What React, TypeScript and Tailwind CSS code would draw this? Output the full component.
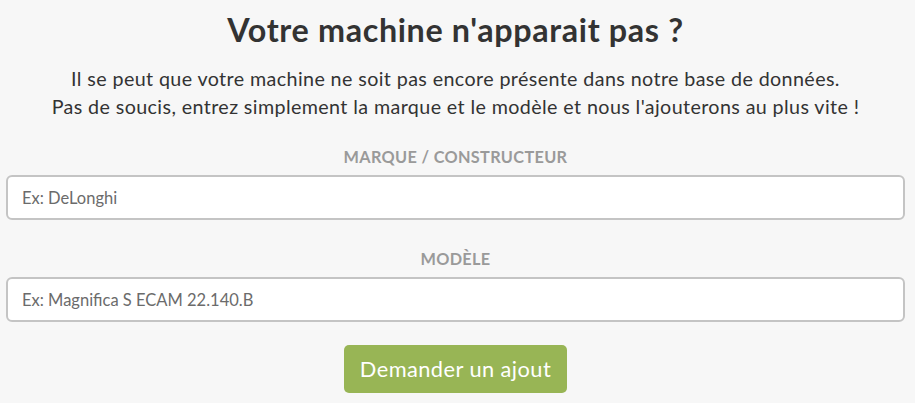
import React from 'react';

const Field: React.FC<{ label: string; placeholder: string }> = ({ label, placeholder }) => (
  <div className="flex flex-col">
    <label className="block h-[20px] text-center text-[16.3px] font-bold uppercase tracking-[0.02em] text-[#9a9a9a] leading-[20px] mb-[8px]">
      {label}
    </label>
    <input
      type="text"
      placeholder={placeholder}
      className="h-[45px] w-full rounded-[6px] border-2 border-[#c4c4c4] bg-white px-[14px] text-[16.5px] text-[#555] placeholder:text-[#6b6b6b] outline-none font-['Lato',sans-serif]"
    />
  </div>
);

export default function App() {
  return (
    <div className="min-h-[403px] w-full bg-[#f7f7f7] font-['Lato','Noto_Sans',sans-serif] pl-[6px] pr-[10px]">
      <h1 className="pt-[10px] text-center text-[32.3px] font-bold leading-[40px] text-[#333] tracking-[0.02em]">
        Votre machine n'apparait pas ?
      </h1>
      <div className="mt-[15px] text-center text-[19.7px] text-[#333] tracking-[0.02em]">
        <p className="h-[28px] leading-[28px]">
          Il se peut que votre machine ne soit pas encore présente dans notre base de données.
        </p>
        <p className="h-[28px] leading-[28px]">
          Pas de soucis, entrez simplement la marque et le modèle et nous l'ajouterons au plus vite !
        </p>
      </div>
      <div className="mt-[26px] flex flex-col gap-[29px]">
        <Field label="Marque / Constructeur" placeholder="Ex: DeLonghi" />
        <Field label="Modèle" placeholder="Ex: Magnifica S ECAM 22.140.B" />
      </div>
      <div className="mt-[23px] flex justify-center">
        <button className="h-[48px] w-[223px] rounded-[5px] bg-[#98b555] text-[21.8px] text-white tracking-[0.02em]">
          Demander un ajout
        </button>
      </div>
    </div>
  );
}
